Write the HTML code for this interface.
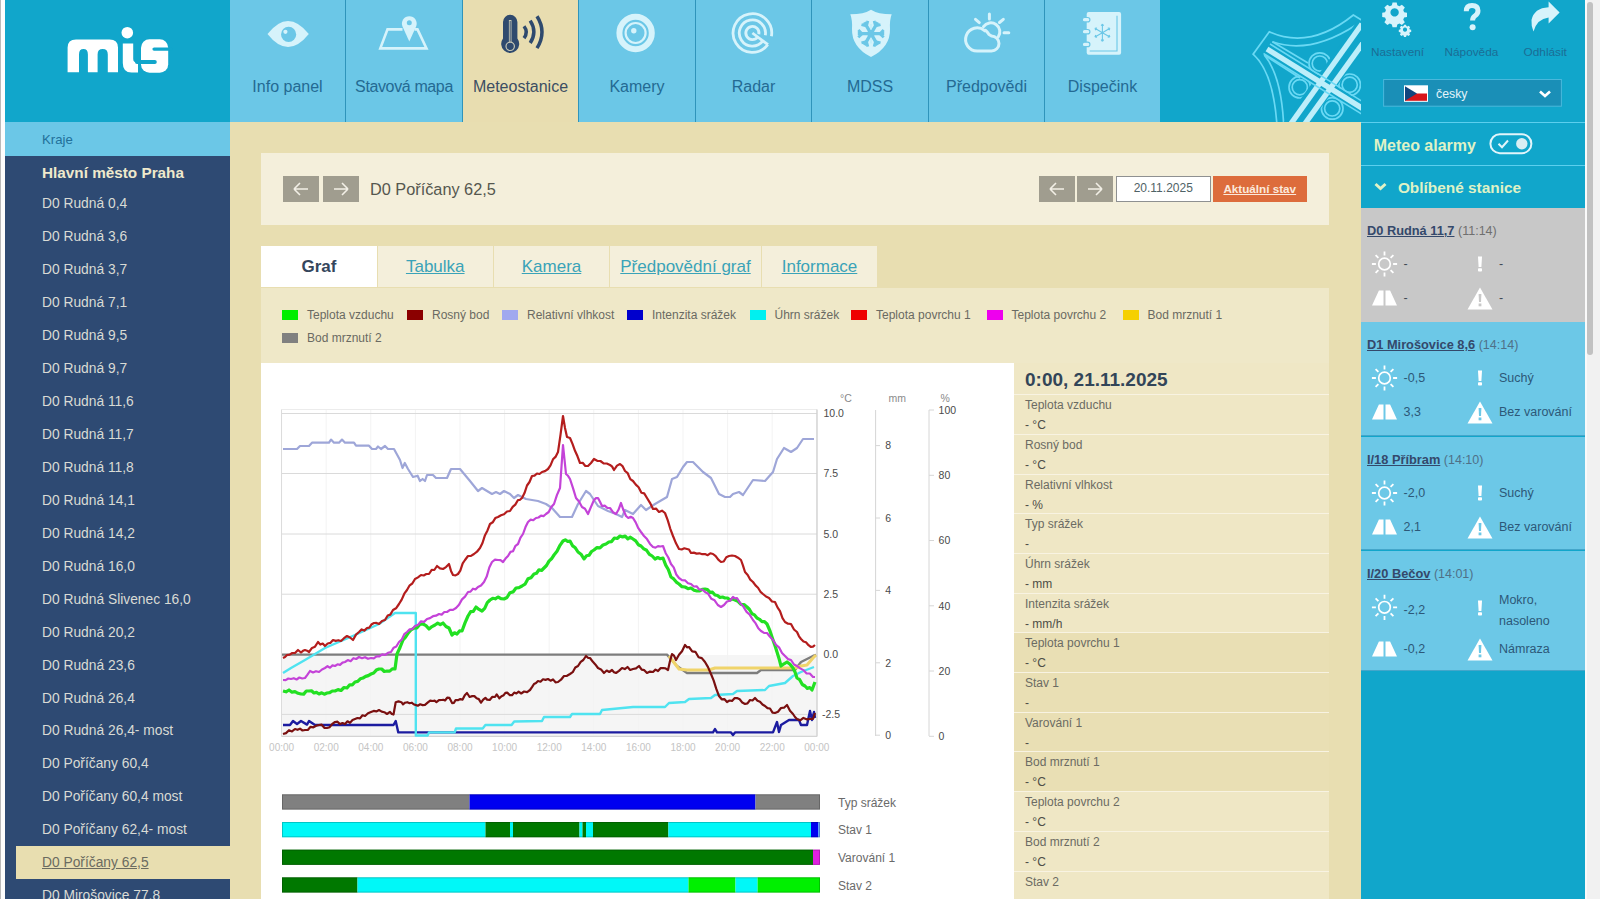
<!DOCTYPE html>
<html><head><meta charset="utf-8">
<style>
*{margin:0;padding:0;box-sizing:border-box}
html,body{width:1600px;height:899px;overflow:hidden;background:#fff;font-family:"Liberation Sans",sans-serif}
.a{position:absolute}
#strip{left:0;top:0;width:5px;height:899px;background:#fdfdfd;border-left:1px solid #b9b9b9}
#logo{left:5px;top:0;width:225px;height:122px;background:#11a6cb}
#nav{left:230px;top:0;width:930px;height:122px;background:#6bc7e7}
.tab{position:absolute;top:0;height:122px}
.tab span{position:absolute;left:-10px;right:-10px;top:78px;text-align:center;font-size:16px;color:#246a93;white-space:nowrap}
.tab.act{background:#e8ddb0}
.tab.act span{color:#3c4e63}
.tab svg{position:absolute;left:0;top:0}
#hdrR{left:1160px;top:0;width:201px;height:122px;background:#11a6cb;overflow:hidden}
#rp{left:1361px;top:0;width:224px;height:899px;background:#11a6cb}
#sb{left:1585px;top:0;width:15px;height:899px;background:#f1f1f1;border-left:2px solid #fafafa}
#thumb{left:1587px;top:2px;width:6px;height:353px;background:#c1c1c1;border-radius:3px}
#side{left:5px;top:122px;width:225px;height:777px;background:#2e4a73;overflow:hidden}
#kraje{left:0;top:0;width:225px;height:34px;background:#6bc7e7;font-size:13.2px;color:#22709a;padding-left:37px;line-height:35px}
#praha{left:37px;top:33.8px;font-size:15.3px;font-weight:bold;color:#efe9cc;line-height:33px;white-space:nowrap}
.si{position:absolute;left:0;width:225px;height:33px;line-height:33px;font-size:13.8px;color:#d9dbd5;padding-left:37px;white-space:nowrap;}
.si.sel{left:11px;width:214px;background:#e8deb0;padding-left:26px;color:#6b6b60}
.si.sel span{text-decoration:underline}
#main{left:230px;top:122px;width:1131px;height:777px;background:#e8deb1;overflow:hidden}
#card{left:31px;top:31px;width:1068px;height:71.5px;background:#f4efdb}
.btn{position:absolute;width:36px;height:25.5px;background:#a09d8f}
.btn svg{position:absolute;left:0;top:0}
#title{left:140px;top:54px;font-size:16.3px;color:#55574f;line-height:20px;white-space:nowrap}
#date{left:886px;top:54px;width:94.5px;height:25.5px;background:#fff;border:1px solid #8e9091;font-size:12px;color:#4f6266;text-align:center;line-height:23px}
#akt{left:982.5px;top:54px;width:94.5px;height:25.5px;background:#dd6c3c;font-size:11.7px;font-weight:bold;color:#fbe9dd;text-align:center;line-height:25px}
#akt span{text-decoration:underline}
.ptab{position:absolute;top:123.5px;height:41.5px;background:#f4efdb;font-size:17px;color:#3aa3b8;text-align:center;line-height:41px;white-space:nowrap}
.ptab span{text-decoration:underline}
.ptab.on{background:#fff;color:#34465c;font-weight:bold}
.ptab.on span{text-decoration:none}
#content{left:31px;top:165.5px;width:1068px;height:620px;background:#efe8c8}
.lg{position:absolute;font-size:12px;color:#6a6a62;white-space:nowrap;line-height:14px}
.lg i{position:absolute;left:-25px;top:2px;width:16px;height:10px}
#chart{left:31px;top:241px;width:753px;height:540px;background:#fff}
#info{left:784px;top:241px;width:315px;height:540px;background:#efe7c5}
#itl{position:absolute;left:11px;top:6px;font-size:19px;font-weight:bold;color:#324558;white-space:nowrap;line-height:22px}
.irow{position:absolute;left:0;width:315px;height:39.8px;border-top:1.5px solid #f8f3e2}
.irow b{position:absolute;left:11px;top:3px;font-weight:normal;font-size:12px;color:#6b6b63;white-space:nowrap}
.irow em{position:absolute;left:11px;top:23px;font-style:normal;font-size:12px;color:#4d4d47;white-space:nowrap}
</style></head>
<body>
<div id="strip" class="a"></div>
<div id="logo" class="a">
<svg width="225" height="122" class="a" style="left:0;top:0">
 <g fill="#fff">
  <path d="M62.6,72.3 V47.5 Q62.6,39.4 71,39.4 H104.5 Q113,39.4 113,47.5 V72.3 H102.8 V54.5 Q102.8,49.1 97.7,49.1 Q92.6,49.1 92.6,54.5 V72.3 H82.9 V54.5 Q82.9,49.1 78.45,49.1 Q74,49.1 74,54.5 V72.3 Z"/>
  <path d="M117.8,43.4 H128.2 V59 Q128.2,62.8 133,62.8 V72.5 H126.5 Q117.8,72.5 117.8,63 Z"/>
  <path d="M162.9,44.8" />
 </g>
 <rect x="136" y="39.2" width="27.2" height="33.6" rx="8.5" fill="#fff"/><rect x="147.4" y="47.4" width="20" height="3.4" rx="1.7" fill="#11a6cb"/><rect x="130" y="59.9" width="21.8" height="4" rx="2" fill="#11a6cb"/>
 <circle cx="122.3" cy="32.7" r="5.8" fill="#fff"/>
</svg>
</div>
<div id="nav" class="a">
<div class="tab" style="left:0px;width:115px"><svg width="115" height="70"><path d="M37.5,34 Q58,8 78.8,34 Q58,60 37.5,34Z" fill="#d6f3fb"/><circle cx="58.6" cy="34.4" r="7.6" fill="#6bc7e7"/><circle cx="55.4" cy="31.8" r="2.1" fill="#d6f3fb"/></svg><span>Info panel</span></div>
<div class="tab" style="left:116px;width:116px"><svg width="116" height="70"><path d="M56.5,29.4 H41.5 L34.3,48.4 H80.5 L71.5,29.4 H68.5" fill="none" stroke="#d6f3fb" stroke-width="2.6"/><path d="M63.3,41.5 L56.5,26.5 A7.4,7.4 0 1,1 70.1,26.5Z" fill="#d6f3fb"/><circle cx="63.3" cy="22.7" r="2.5" fill="#6bc7e7"/></svg><span style="letter-spacing:-0.37px">Stavová mapa</span></div>
<div class="tab act" style="left:233px;width:115px"><svg width="115" height="70"><path d="M40,38.5 V22 A7.2,7.2 0 0,1 54.4,22 V38.5 A9,9 0 1,1 40,38.5Z" fill="#2f4a6e"/><path d="M47.2,20 V42" stroke="#c8c9b6" stroke-width="2.6"/><path d="M47.2,21 V42" stroke="#2f4a6e" stroke-width="0.9"/><circle cx="47.2" cy="46.3" r="4.2" fill="#2f4a6e" stroke="#c8c9b6" stroke-width="1.2"/><g fill="none" stroke="#2f4a6e" stroke-width="3.5"><path d="M61,26.2 Q65.5,32 61,38.1"/><path d="M67.2,20.6 Q74.5,31.8 67.2,43"/><path d="M74,16.2 Q84,32 74,48.1"/></g></svg><span>Meteostanice</span></div>
<div class="tab" style="left:349px;width:116px"><svg width="116" height="70"><circle cx="56.6" cy="33" r="16.2" fill="none" stroke="#d6f3fb" stroke-width="6"/><circle cx="56.6" cy="33" r="10" fill="none" stroke="#d6f3fb" stroke-width="2.2"/><circle cx="54.8" cy="30.8" r="2.7" fill="#d6f3fb"/></svg><span>Kamery</span></div>
<div class="tab" style="left:466px;width:115px"><svg width="115" height="70"><g fill="none" stroke="#d6f3fb" stroke-width="2.8"><path d="M71.81,44.62 A19.3,19.3 0 1,1 75.41,36.35"/><path d="M66.86,40.88 A13.1,13.1 0 1,1 69.30,35.27"/><path d="M61.67,36.97 A6.6,6.6 0 1,1 62.90,34.15"/><path d="M56.4,33 L71.97,44.74"/></g></svg><span>Radar</span></div>
<div class="tab" style="left:582px;width:116px"><svg width="116" height="70"><path d="M59,9.7 Q66,14.3 79.7,14.3 Q77.5,20 78,29 Q78.5,47 59,57.1 Q39.5,47 40,29 Q40.5,20 38.3,14.3 Q52,14.3 59,9.7Z" fill="#d6f3fb"/><path d="M59,33.7 L72.20,33.70 M59,33.7 L65.60,45.13 M59,33.7 L52.40,45.13 M59,33.7 L45.80,33.70 M59,33.7 L52.40,22.27 M59,33.7 L65.60,22.27" stroke="#6bc7e7" stroke-width="3.3" fill="none"/><path d="M68.00,33.70 L71.68,30.02 M68.00,33.70 L71.68,37.38 M63.50,41.49 L68.52,42.84 M63.50,41.49 L62.15,46.52 M54.50,41.49 L55.85,46.52 M54.50,41.49 L49.48,42.84 M50.00,33.70 L46.32,37.38 M50.00,33.70 L46.32,30.02 M54.50,25.91 L49.48,24.56 M54.50,25.91 L55.85,20.88 M63.50,25.91 L62.15,20.88 M63.50,25.91 L68.52,24.56" stroke="#6bc7e7" stroke-width="2.8" fill="none"/><circle cx="59" cy="33.7" r="3.6" fill="#6bc7e7"/><path d="M59,24 V29.5 M59,38 V43.5" stroke="#b9ecf8" stroke-width="1"/></svg><span>MDSS</span></div>
<div class="tab" style="left:699px;width:115px"><svg width="115" height="70"><g fill="none" stroke="#d6f3fb" stroke-width="3" stroke-linecap="round"><path d="M48.15,51.00 H62.50 A7.5,7.5 0 0,0 62.50,36.00 L60.00,34.50 Q57.00,29.50 55.57,30.60 A11.55,11.55 0 1,0 48.15,51.00Z"/><path d="M54.50,26.60 A8.3,8.3 0 0,1 69.20,37.00"/><path d="M60.40,14.00 V19 M46.50,19.30 L50.30,22.60 M74.30,19.30 L70.50,22.50 M75.00,32.70 H79.80"/></g></svg><span>Předpovědi</span></div>
<div class="tab" style="left:815px;width:115px"><svg width="115" height="70"><path d="M43.70,12.00 H74.10 Q76.10,12.00 76.10,14.00 V52.7 Q76.10,54.70 74.10,54.70 H43.70 Q41.70,54.70 41.70,52.70 V14 Q41.70,12.00 43.70,12.00Z" fill="#d6f3fb"/><path d="M72.00,15.70 V51 H44.70" fill="none" stroke="#6bc7e7" stroke-width="1.1"/><g fill="#d6f3fb" stroke="#6bc7e7" stroke-width="1.2"><rect x="37.30" y="17.50" width="7.6" height="4.4" rx="2.2"/><rect x="37.30" y="29.50" width="7.6" height="4.4" rx="2.2"/><rect x="37.30" y="42.20" width="7.6" height="4.4" rx="2.2"/></g><path d="M57.40,32.70 L57.40,41.40 M57.40,41.40 L56.14,39.60 M57.40,41.40 L58.66,39.60 M57.40,32.70 L49.87,37.05 M49.87,37.05 L50.80,35.06 M49.87,37.05 L52.06,37.24 M57.40,32.70 L49.87,28.35 M49.87,28.35 L52.06,28.16 M49.87,28.35 L50.80,30.34 M57.40,32.70 L57.40,24.00 M57.40,24.00 L58.66,25.80 M57.40,24.00 L56.14,25.80 M57.40,32.70 L64.93,28.35 M64.93,28.35 L64.00,30.34 M64.93,28.35 L62.74,28.16 M57.40,32.70 L64.93,37.05 M64.93,37.05 L62.74,37.24 M64.93,37.05 L64.00,35.06" stroke="#6bc7e7" stroke-width="1.1" fill="none"/></svg><span>Dispečink</span></div>
<div class="a" style="left:115px;top:0;width:1px;height:122px;background:#2f94bb"></div>
<div class="a" style="left:232px;top:0;width:1px;height:122px;background:#2f94bb"></div>
<div class="a" style="left:348px;top:0;width:1px;height:122px;background:#2f94bb"></div>
<div class="a" style="left:465px;top:0;width:1px;height:122px;background:#2f94bb"></div>
<div class="a" style="left:581px;top:0;width:1px;height:122px;background:#2f94bb"></div>
<div class="a" style="left:698px;top:0;width:1px;height:122px;background:#2f94bb"></div>
<div class="a" style="left:814px;top:0;width:1px;height:122px;background:#2f94bb"></div>
</div>
<div id="hdrR" class="a">
<svg width="201" height="122" class="a" style="left:0;top:0" viewBox="1160 0 201 122">
 <g fill="none" stroke="#6ad9f4" stroke-width="1.7">
  <path d="M1276.8,123 Q1273,72 1253.1,54.2 L1269.3,31.8 Q1310,50 1353.4,15 L1362,20.5"/>
  <path d="M1283.6,123 Q1281,75 1264.3,55"/>
  <path d="M1272.4,41.8 Q1310,55 1356,25"/>
  <path d="M1264.3,55 L1300,78"/>
  <path d="M1272.4,41.8 L1308,63"/>
  <circle cx="1319.8" cy="63.6" r="10.8"/>
  <circle cx="1319.8" cy="63.6" r="7.6"/>
  <circle cx="1299.8" cy="87.2" r="10.8"/>
  <circle cx="1299.8" cy="87.2" r="7.6"/>
  <circle cx="1349.7" cy="84.8" r="10.8"/>
  <circle cx="1349.7" cy="84.8" r="7.6"/>
  <circle cx="1332.2" cy="108.4" r="10.8"/>
  <circle cx="1332.2" cy="108.4" r="7.6"/>
 </g>
 <g fill="none" stroke="#11a6cb" stroke-width="10">
  <path d="M1266,48.5 L1365,110"/>
  <path d="M1362,23 L1288,125"/>
  <path d="M1366,38 L1302,125"/>
 </g>
 <g fill="none" stroke="#bdeefa" stroke-width="5.4">
  <path d="M1267,49 L1365,110"/>
  <path d="M1362,24 L1290,125"/>
  <path d="M1366,39 L1304,125"/>
 </g>
 <g fill="none" stroke="#6ad9f4" stroke-width="1.5">
  <path d="M1263.5,53.5 L1365,116"/>
  <path d="M1270,44 L1365,103"/>
 </g>
</svg>
</div>
<div id="main" class="a">
<div id="card" class="a">
<div class="btn" style="left:22px;top:23px"><svg width="36" height="26"><path d="M11,13H25M11,13L17,7M11,13L17,19" stroke="#f2efe6" stroke-width="1.6" fill="none"/></svg></div>
<div class="btn" style="left:61.5px;top:23px"><svg width="36" height="26"><path d="M11,13H25M25,13L19,7M25,13L19,19" stroke="#f2efe6" stroke-width="1.6" fill="none"/></svg></div>
<div class="a" id="title" style="left:109px;top:26px">D0 Poříčany 62,5</div>
<div class="btn" style="left:777.6px;top:23px"><svg width="36" height="26"><path d="M11,13H25M11,13L17,7M11,13L17,19" stroke="#f2efe6" stroke-width="1.6" fill="none"/></svg></div>
<div class="btn" style="left:816.4px;top:23px"><svg width="36" height="26"><path d="M11,13H25M25,13L19,7M25,13L19,19" stroke="#f2efe6" stroke-width="1.6" fill="none"/></svg></div>
<div class="a" id="date" style="left:855px;top:23px">20.11.2025</div>
<div class="a" id="akt" style="left:951.5px;top:23px"><span>Aktuální stav</span></div>
</div>
<div class="ptab on" style="left:31px;width:116px"><span>Graf</span></div>
<div class="ptab" style="left:147.5px;width:115.5px"><span>Tabulka</span></div>
<div class="ptab" style="left:264px;width:115px"><span>Kamera</span></div>
<div class="ptab" style="left:380px;width:151px"><span>Předpovědní graf</span></div>
<div class="ptab" style="left:532px;width:115px"><span>Informace</span></div>
<div id="content" class="a"></div>
<div class="lg" style="left:77px;top:186px"><i style="background:#00ee00"></i>Teplota vzduchu</div>
<div class="lg" style="left:202px;top:186px"><i style="background:#8b0000"></i>Rosný bod</div>
<div class="lg" style="left:297px;top:186px"><i style="background:#a0a8ef"></i>Relativní vlhkost</div>
<div class="lg" style="left:422px;top:186px"><i style="background:#0000cd"></i>Intenzita srážek</div>
<div class="lg" style="left:544.5px;top:186px"><i style="background:#00f0f0"></i>Úhrn srážek</div>
<div class="lg" style="left:646px;top:186px"><i style="background:#ee0000"></i>Teplota povrchu 1</div>
<div class="lg" style="left:781.5px;top:186px"><i style="background:#ee00ee"></i>Teplota povrchu 2</div>
<div class="lg" style="left:917.5px;top:186px"><i style="background:#f5d000"></i>Bod mrznutí 1</div>
<div class="lg" style="left:77px;top:209px"><i style="background:#808080"></i>Bod mrznutí 2</div>
<div id="chart" class="a"></div>
<div id="info" class="a">
<div id="itl">0:00, 21.11.2025</div>
<div class="irow" style="top:31.1px"><b>Teplota vzduchu</b><em>- °C</em></div>
<div class="irow" style="top:70.8px"><b>Rosný bod</b><em>- °C</em></div>
<div class="irow" style="top:110.5px"><b>Relativní vlhkost</b><em>- %</em></div>
<div class="irow" style="top:150.2px"><b>Typ srážek</b><em>-</em></div>
<div class="irow" style="top:189.9px"><b>Úhrn srážek</b><em>- mm</em></div>
<div class="irow" style="top:229.6px"><b>Intenzita srážek</b><em>- mm/h</em></div>
<div class="irow" style="top:269.3px;background:#e9dfb4"><b>Teplota povrchu 1</b><em>- °C</em></div>
<div class="irow" style="top:309.0px;background:#e9dfb4"><b>Stav 1</b><em>-</em></div>
<div class="irow" style="top:348.7px;background:#e9dfb4"><b>Varování 1</b><em>-</em></div>
<div class="irow" style="top:388.4px;background:#e9dfb4"><b>Bod mrznutí 1</b><em>- °C</em></div>
<div class="irow" style="top:428.1px"><b>Teplota povrchu 2</b><em>- °C</em></div>
<div class="irow" style="top:467.8px"><b>Bod mrznutí 2</b><em>- °C</em></div>
<div class="irow" style="top:507.5px"><b>Stav 2</b><em></em></div>
</div>
</div>
<svg class="a" style="left:261px;top:363px" width="753" height="536" viewBox="261 363 753 536">
<rect x="282" y="655" width="535" height="81.5" fill="#f5f5f5"/>
<line x1="281.6" y1="410" x2="281.6" y2="736" stroke="#f3f3f3" stroke-width="1"/>
<line x1="326.2" y1="410" x2="326.2" y2="736" stroke="#f3f3f3" stroke-width="1"/>
<line x1="370.8" y1="410" x2="370.8" y2="736" stroke="#f3f3f3" stroke-width="1"/>
<line x1="415.4" y1="410" x2="415.4" y2="736" stroke="#f3f3f3" stroke-width="1"/>
<line x1="460.0" y1="410" x2="460.0" y2="736" stroke="#f3f3f3" stroke-width="1"/>
<line x1="504.6" y1="410" x2="504.6" y2="736" stroke="#f3f3f3" stroke-width="1"/>
<line x1="549.2" y1="410" x2="549.2" y2="736" stroke="#f3f3f3" stroke-width="1"/>
<line x1="593.8" y1="410" x2="593.8" y2="736" stroke="#f3f3f3" stroke-width="1"/>
<line x1="638.4" y1="410" x2="638.4" y2="736" stroke="#f3f3f3" stroke-width="1"/>
<line x1="683.0" y1="410" x2="683.0" y2="736" stroke="#f3f3f3" stroke-width="1"/>
<line x1="727.6" y1="410" x2="727.6" y2="736" stroke="#f3f3f3" stroke-width="1"/>
<line x1="772.2" y1="410" x2="772.2" y2="736" stroke="#f3f3f3" stroke-width="1"/>
<line x1="816.8" y1="410" x2="816.8" y2="736" stroke="#f3f3f3" stroke-width="1"/>
<line x1="281.5" y1="409.5" x2="817" y2="409.5" stroke="#ececec" stroke-width="1"/>
<line x1="282" y1="413.5" x2="817" y2="413.5" stroke="#dadada" stroke-width="1"/>
<line x1="282" y1="473.5" x2="817" y2="473.5" stroke="#dadada" stroke-width="1"/>
<line x1="282" y1="534" x2="817" y2="534" stroke="#dadada" stroke-width="1"/>
<line x1="282" y1="594.2" x2="817" y2="594.2" stroke="#dadada" stroke-width="1"/>
<line x1="282" y1="714.4" x2="817" y2="714.4" stroke="#dadada" stroke-width="1"/>
<line x1="281.5" y1="409.5" x2="281.5" y2="736.5" stroke="#dcdcdc" stroke-width="1"/>
<line x1="817" y1="409.5" x2="817" y2="736.5" stroke="#cfcfcf" stroke-width="1.3"/>
<line x1="281.5" y1="736.4" x2="817" y2="736.4" stroke="#d4d4d4" stroke-width="1.2"/>
<polyline points="282.0,654.6 667.0,654.6 677.0,666.0 687.0,673.0 757.0,673.0 761.0,670.0 795.0,670.0 801.0,662.0 813.0,656.0 816.0,655.0" fill="none" stroke="#7d7d7d" stroke-width="2.4" stroke-linejoin="round"/>
<polyline points="669.0,656.0 679.0,669.0 687.0,670.0 709.0,670.0 715.0,668.0 795.0,668.0 801.0,666.0 807.0,665.0 813.0,658.0 816.0,655.0" fill="none" stroke="#f0d46a" stroke-width="3" stroke-linejoin="round"/>
<polyline points="283.0,449.0 297.0,449.0 300.0,446.0 309.0,446.0 312.0,442.7 329.0,442.7 331.0,439.6 334.0,442.7 339.0,442.7 342.0,439.6 345.0,442.7 354.0,442.7 356.0,445.7 369.0,445.7 372.0,449.0 376.0,449.0 378.0,446.5 381.0,449.0 385.0,446.0 388.0,449.0 394.0,449.0 400.0,460.0 402.5,468.0 404.8,463.0 408.0,469.0 413.0,477.0 417.6,475.7 420.0,481.0 422.6,479.0 425.0,481.0 427.0,475.0 433.0,475.0 436.0,478.0 447.0,478.0 451.0,469.0 460.0,469.0 470.0,481.0 478.0,491.0 482.0,488.0 492.0,494.0 496.0,492.0 500.0,494.0 504.0,491.0 510.0,494.0 514.0,498.0 518.0,495.0 526.0,499.0 538.0,501.0 546.0,504.0 552.0,508.0 560.0,517.0 572.0,517.0 578.0,504.0 586.0,491.0 590.0,494.0 598.0,506.0 608.0,511.0 616.0,514.0 622.0,517.0 625.0,510.0 633.0,514.0 641.0,505.0 646.0,510.0 655.0,504.0 667.0,497.0 672.0,479.0 677.0,477.0 683.0,467.0 687.0,462.0 693.0,462.0 703.0,472.0 711.0,478.0 719.0,494.0 725.0,497.0 730.0,497.0 733.0,494.0 739.0,492.0 743.0,495.0 753.0,480.0 765.0,481.0 773.0,472.0 777.0,459.0 784.0,448.0 791.0,452.0 797.0,448.0 803.0,439.0 814.0,439.0" fill="none" stroke="#9ea6d8" stroke-width="2.2" stroke-linejoin="round"/>
<polyline points="283.0,725.0 290.0,725.0 293.0,721.0 297.0,724.0 301.0,721.0 307.0,724.6 309.0,721.0 315.0,725.0 393.5,725.0 395.7,721.0 398.3,732.4 713.0,732.4 715.0,729.0 717.0,732.4 731.0,732.4 733.0,735.0 735.0,732.4 773.0,732.4 777.0,722.0 779.0,732.0 781.0,725.0 789.0,720.0 799.0,720.0 801.0,725.0 807.0,725.0 810.0,711.0 812.0,720.0 814.0,712.0 815.0,718.0" fill="none" stroke="#1c1ca0" stroke-width="2.4" stroke-linejoin="round"/>
<polyline points="283.0,673.0 291.0,668.0 305.0,660.0 325.0,648.0 355.0,635.0 379.0,624.0 395.0,613.0 415.8,613.0 415.8,735.5 427.6,735.5 429.0,732.4 454.7,732.4 456.0,728.5 482.7,728.5 485.4,725.0 511.6,725.0 514.2,721.5 542.0,721.0 544.0,717.0 570.0,717.0 572.0,714.0 600.0,714.0 602.0,710.0 633.0,707.0 665.0,707.0 669.0,703.0 685.0,702.0 689.0,699.0 711.0,698.0 715.0,695.0 733.0,694.0 737.0,691.0 765.0,690.0 769.0,686.0 785.0,683.0 793.0,676.0 801.0,672.0 814.0,667.0" fill="none" stroke="#4fe3f0" stroke-width="2.4" stroke-linejoin="round"/>
<polyline points="283.0,734.0 286.0,733.1 289.0,730.2 292.0,731.4 295.0,729.0 297.5,729.8 300.0,728.7 302.5,730.5 305.0,730.0 307.8,730.0 310.6,726.8 313.4,727.3 316.2,725.8 319.0,725.0 321.7,724.7 324.3,727.8 327.0,728.0 329.7,727.2 332.3,723.8 335.0,722.0 337.5,721.7 340.0,724.1 342.5,723.0 345.0,724.0 347.5,721.3 350.0,722.9 352.5,720.0 355.0,719.0 357.5,718.0 360.0,718.4 362.5,715.3 365.0,716.0 368.0,713.3 371.0,712.0 373.7,710.9 376.3,711.4 379.0,710.0 381.7,711.6 384.3,712.2 387.0,714.0 390.0,711.9 391.8,714.0 393.5,714.5 395.7,702.2 398.5,701.4 401.4,702.2 403.0,704.4 405.0,702.7 407.3,702.2 409.6,703.2 411.9,702.7 413.6,704.3 415.4,704.9 417.8,705.7 420.2,704.3 422.6,705.1 425.0,704.9 427.6,702.7 430.2,700.6 432.9,701.0 434.6,700.7 436.4,702.2 439.0,700.1 441.6,700.0 443.3,699.8 445.0,700.5 447.2,697.7 449.5,697.9 452.1,703.1 453.9,702.9 455.6,700.0 457.9,700.2 460.3,699.1 462.6,699.6 464.8,695.2 467.0,693.0 469.6,697.0 472.2,696.1 474.4,696.1 476.6,698.3 478.8,699.1 481.0,702.7 483.2,699.6 485.4,697.9 487.1,699.6 489.7,700.0 492.4,696.8 495.0,697.0 496.7,694.4 499.4,698.3 501.5,696.2 503.7,695.2 505.4,692.9 507.2,692.6 509.9,695.2 512.0,695.2 514.2,692.6 516.4,693.5 518.6,691.7 521.2,693.5 524.1,691.5 527.1,692.1 530.0,690.0 532.0,687.2 534.0,684.0 536.0,683.0 538.0,681.0 540.5,681.7 543.0,679.3 545.5,679.9 548.0,679.0 550.5,680.7 553.0,679.4 555.5,682.3 558.0,682.0 561.0,679.7 564.0,676.0 567.0,675.8 570.0,674.0 572.7,672.2 575.3,667.5 578.0,666.0 580.7,661.8 583.3,660.0 586.0,656.0 588.0,657.8 590.0,658.0 592.7,661.6 595.3,664.4 598.0,668.0 601.0,669.4 604.0,673.0 606.7,670.5 609.3,672.0 612.0,670.0 614.0,672.2 616.0,673.0 619.0,670.9 622.0,668.0 624.8,669.1 627.5,667.0 630.2,670.0 633.0,669.0 636.0,668.4 639.0,666.0 641.7,669.7 644.3,670.2 647.0,673.0 650.0,671.6 653.0,672.0 655.5,669.6 658.0,671.0 660.5,668.2 663.0,668.0 665.5,668.4 668.0,670.0 670.0,661.1 672.0,654.0 674.0,655.6 676.0,660.0 679.0,654.8 682.0,651.2 685.0,645.0 687.0,647.3 689.0,647.0 692.2,651.4 695.4,651.8 698.6,657.3 701.8,658.1 705.0,662.0 708.0,667.1 711.0,674.0 713.7,680.6 716.3,688.9 719.0,696.0 721.7,699.3 724.3,699.1 727.0,702.0 729.5,700.5 732.0,700.9 734.5,698.2 737.0,698.0 739.7,699.3 742.3,702.6 745.0,704.0 747.5,703.4 750.0,700.0 752.5,700.5 755.0,698.0 757.5,700.8 760.0,701.8 762.5,704.5 765.0,706.0 767.5,708.2 770.0,708.5 772.5,712.6 775.0,713.0 778.0,711.7 781.0,708.0 784.0,707.7 787.0,705.0 790.0,710.8 793.0,714.0 795.0,717.0 797.0,719.0 800.2,720.3 803.4,717.9 806.6,719.3 809.8,718.8 813.0,719.0 815.0,713.0" fill="none" stroke="#7a1010" stroke-width="2.2" stroke-linejoin="round"/>
<polyline points="283.0,691.0 286.0,691.8 289.0,690.0 292.0,692.2 295.0,691.7 298.0,693.3 301.0,694.0 303.7,694.1 306.3,691.0 309.0,691.0 311.5,690.8 314.0,693.0 316.5,692.4 319.0,694.0 321.7,692.8 324.3,694.2 327.0,693.0 329.7,692.7 332.3,691.0 335.0,691.0 338.0,689.6 341.0,690.5 344.0,687.5 347.0,688.0 349.7,684.8 352.3,684.8 355.0,682.0 357.7,681.4 360.3,678.8 363.0,678.0 365.7,676.4 368.3,675.6 371.0,674.0 373.7,673.0 376.3,670.1 379.0,669.0 381.7,669.0 384.3,671.5 387.0,671.0 389.7,671.1 392.3,668.9 395.0,669.0 397.0,654.0 400.0,647.5 403.0,640.0 405.7,636.9 408.3,632.8 411.0,630.0 414.0,628.1 417.0,627.8 420.0,624.2 423.0,624.0 426.0,625.6 429.0,629.0 432.0,626.6 435.0,625.0 437.7,623.2 440.3,624.7 443.0,623.0 446.0,626.5 449.0,628.0 452.0,635.0 454.5,632.8 457.0,634.0 459.5,630.9 462.0,631.0 465.0,622.9 468.0,616.0 470.7,611.7 473.3,611.3 476.0,607.0 479.0,609.4 482.0,611.0 484.7,608.4 487.3,602.7 490.0,600.0 492.7,598.3 495.3,598.8 498.0,597.0 501.0,598.7 504.0,599.0 507.0,597.5 510.0,592.7 513.0,591.9 516.0,588.0 519.0,587.6 522.0,586.0 525.0,584.2 528.0,578.8 531.0,577.7 534.0,574.0 536.5,573.3 539.0,569.8 541.5,570.5 544.0,568.0 546.5,565.5 549.0,561.1 551.5,558.8 554.0,555.0 557.0,551.3 560.0,545.3 563.0,541.0 565.3,539.8 567.7,541.5 570.0,541.0 572.7,545.9 575.3,547.8 578.0,552.0 581.0,554.2 584.0,559.0 586.5,555.8 589.0,555.3 591.5,551.5 594.0,550.0 597.0,547.6 600.0,547.8 603.0,545.0 606.0,544.0 608.8,542.0 611.6,541.6 614.4,538.0 617.2,538.5 620.0,536.0 622.6,536.9 625.2,536.1 627.8,538.8 630.4,537.2 633.0,539.0 635.7,540.9 638.3,544.7 641.0,546.0 643.8,548.9 646.6,550.3 649.4,554.3 652.2,556.0 655.0,559.0 657.7,557.5 660.3,558.7 663.0,558.0 665.7,565.1 668.3,569.5 671.0,577.0 673.7,578.9 676.3,582.1 679.0,584.0 682.0,586.7 685.0,587.0 688.0,588.7 691.0,588.0 694.0,590.2 697.0,591.0 699.7,590.9 702.3,589.3 705.0,589.0 707.5,589.6 710.0,592.3 712.5,592.2 715.0,595.0 717.5,595.5 720.0,597.5 722.5,597.0 725.0,598.0 727.5,598.0 730.0,600.1 732.5,599.1 735.0,600.0 738.0,601.3 741.0,604.5 744.0,604.6 747.0,607.0 749.5,609.5 752.0,613.8 754.5,614.9 757.0,618.0 759.5,619.3 762.0,621.6 764.5,621.6 767.0,624.0 770.0,631.0 773.0,640.0 775.0,645.7 777.0,652.0 779.0,658.4 781.0,666.0 784.0,663.8 787.0,662.0 790.0,664.3 793.0,668.0 795.0,672.0 797.0,678.0 799.7,679.7 802.3,684.5 805.0,686.0 807.3,688.4 809.7,687.5 812.0,690.0 815.0,682.0" fill="none" stroke="#22e022" stroke-width="3.2" stroke-linejoin="round"/>
<polyline points="283.0,680.0 285.7,680.1 288.3,678.5 291.0,679.0 293.8,678.2 296.6,679.5 299.4,677.5 302.2,678.5 305.0,678.0 307.5,674.7 310.0,671.0 313.0,672.5 316.0,671.2 319.0,672.0 322.0,669.5 325.0,668.0 327.5,666.2 330.0,667.7 332.5,665.4 335.0,666.0 337.5,664.3 340.0,664.9 342.5,662.6 345.0,662.0 347.8,660.1 350.6,661.2 353.4,658.2 356.2,659.0 359.0,657.0 362.0,658.2 365.0,657.2 368.0,658.8 371.0,658.0 373.8,658.3 376.6,656.3 379.4,656.4 382.2,654.4 385.0,655.0 388.0,652.8 391.0,652.0 393.7,647.7 396.3,646.5 399.0,642.0 401.7,639.7 404.3,634.1 407.0,632.0 409.7,629.4 412.3,629.1 415.0,626.0 418.0,624.9 421.0,621.3 424.0,621.9 427.0,619.0 430.0,618.1 433.0,616.2 436.0,615.7 439.0,614.0 441.7,614.6 444.3,612.0 447.0,612.0 450.0,609.8 453.0,609.9 456.0,608.0 459.0,604.8 462.0,599.4 465.0,596.6 468.0,592.0 470.5,591.6 473.0,588.7 475.5,589.4 478.0,587.0 481.0,585.5 484.0,582.0 486.7,576.6 489.3,567.5 492.0,562.0 495.0,559.7 498.0,560.0 500.5,560.1 503.0,562.0 505.5,558.6 508.0,556.0 510.5,551.9 513.0,551.3 515.5,545.8 518.0,544.0 520.5,537.7 523.0,534.0 525.5,527.1 528.0,522.0 530.7,519.6 533.3,520.2 536.0,518.0 538.5,517.5 541.0,515.7 543.5,516.1 546.0,514.0 548.7,512.0 551.3,507.0 554.0,504.0 557.0,494.9 560.0,488.0 563.0,445.0 566.0,474.0 568.0,475.8 570.0,479.0 573.0,488.1 576.0,498.0 579.0,501.5 582.0,507.0 585.0,508.8 588.0,514.0 591.0,506.8 594.0,500.0 596.0,498.1 598.0,498.0 600.0,501.8 602.0,506.0 604.7,505.7 607.3,507.9 610.0,508.0 613.0,512.2 616.0,514.0 618.5,509.8 621.0,503.0 623.5,510.3 626.0,516.0 628.3,518.0 630.7,516.8 633.0,518.0 635.7,522.4 638.3,528.2 641.0,532.0 644.0,536.0 647.0,539.1 650.0,543.9 653.0,547.0 655.5,547.6 658.0,546.1 660.5,546.5 663.0,546.0 665.7,553.2 668.3,557.5 671.0,564.0 673.7,567.4 676.3,574.5 679.0,578.0 682.0,580.1 685.0,580.3 688.0,583.3 691.0,584.0 693.8,586.5 696.6,586.3 699.4,589.6 702.2,589.5 705.0,592.0 708.2,593.8 711.4,598.8 714.6,600.3 717.8,605.0 721.0,607.0 724.0,605.0 727.0,601.5 730.0,600.8 733.0,597.0 735.0,598.3 737.0,598.0 740.2,603.2 743.4,606.6 746.6,611.9 749.8,614.8 753.0,620.0 755.7,623.4 758.3,628.2 761.0,631.0 764.0,632.9 767.0,633.0 770.0,636.8 773.0,640.0 776.0,644.9 779.0,647.3 782.0,652.9 785.0,656.0 788.0,659.1 791.0,660.0 794.0,664.5 797.0,666.0 800.2,668.4 803.4,670.1 806.6,673.5 809.8,673.5 813.0,677.0 815.0,677.0" fill="none" stroke="#c443d8" stroke-width="2.2" stroke-linejoin="round"/>
<polyline points="283.0,658.0 285.0,657.0 287.0,655.0 289.7,654.7 292.3,653.0 295.0,653.0 298.0,650.0 301.0,652.5 303.0,650.8 305.0,650.0 307.0,650.7 309.0,652.0 312.0,647.9 315.0,646.7 318.0,642.0 320.3,644.6 322.7,643.5 325.0,646.0 327.7,643.5 330.3,642.9 333.0,640.0 335.7,640.9 338.3,640.2 341.0,641.0 344.0,638.2 347.0,636.0 350.0,637.5 353.0,640.0 356.0,634.6 359.0,632.0 361.7,629.4 364.3,630.6 367.0,628.0 369.3,627.6 371.7,624.2 374.0,623.0 376.5,622.9 379.0,624.0 382.0,621.0 385.0,620.0 387.7,615.5 390.3,614.6 393.0,610.0 396.0,608.3 399.0,604.0 401.7,599.6 404.3,593.7 407.0,590.0 409.7,585.3 412.3,583.5 415.0,579.0 418.0,577.4 421.0,575.0 423.7,575.5 426.3,574.0 429.0,574.0 431.7,569.9 434.3,570.0 437.0,566.0 440.0,568.4 443.0,569.0 446.0,567.1 449.0,564.0 451.0,570.9 453.0,575.0 455.5,575.4 458.0,574.0 460.3,570.7 462.7,563.4 465.0,560.0 468.0,556.0 471.0,555.9 474.0,554.0 477.0,551.7 480.0,548.0 482.5,543.0 485.0,535.2 487.5,530.4 490.0,524.0 492.7,522.3 495.3,518.1 498.0,517.0 501.0,515.2 504.0,514.3 507.0,511.5 510.0,511.0 512.7,506.8 515.3,504.6 518.0,500.0 520.0,499.8 522.0,498.0 524.5,493.1 527.0,485.5 529.5,482.0 532.0,476.0 534.5,475.7 537.0,473.5 539.5,474.0 542.0,472.0 545.0,471.1 548.0,469.0 550.5,465.4 553.0,459.3 555.5,456.9 558.0,452.0 560.5,434.9 563.0,416.0 565.0,427.9 567.0,437.0 570.0,438.0 572.5,443.9 575.0,450.8 577.5,456.3 580.0,463.0 582.7,462.8 585.3,466.0 588.0,466.0 591.0,463.0 594.0,459.0 597.2,460.8 600.4,461.0 603.6,463.4 606.8,463.5 610.0,465.0 612.0,466.4 614.0,470.0 617.0,465.6 620.0,464.0 622.5,466.1 625.0,471.0 627.7,473.2 630.3,479.1 633.0,481.0 635.8,484.6 638.6,487.2 641.4,492.7 644.2,493.4 647.0,498.0 650.0,502.8 653.0,509.0 656.0,508.6 659.0,512.0 662.0,510.7 665.0,513.0 667.7,520.1 670.3,528.8 673.0,536.0 676.0,543.3 679.0,549.0 681.7,549.4 684.3,548.3 687.0,549.0 689.0,549.5 691.0,553.0 693.8,552.6 696.6,553.6 699.4,553.3 702.2,554.2 705.0,554.0 707.7,555.2 710.3,553.3 713.0,554.0 715.7,556.1 718.3,559.7 721.0,562.0 723.7,561.5 726.3,557.2 729.0,556.0 732.0,555.5 735.0,556.0 738.0,557.7 741.0,560.0 743.0,565.7 745.0,572.0 747.7,574.9 750.3,579.7 753.0,582.0 755.5,585.4 758.0,587.7 760.5,591.8 763.0,594.0 766.0,596.5 769.0,598.0 772.0,601.5 775.0,602.0 777.5,607.4 780.0,611.1 782.5,618.2 785.0,622.0 788.0,623.7 791.0,624.0 794.0,629.5 797.0,632.0 799.0,636.3 801.0,639.0 803.5,641.5 806.0,642.3 808.5,645.2 811.0,647.0 813.0,646.7 815.0,645.0" fill="none" stroke="#b41d1d" stroke-width="2.2" stroke-linejoin="round"/>
<g font-family="Liberation Sans" font-size="10.5" fill="#4a4a4a">
<text x="823.5" y="417.3">10.0</text>
<text x="823.5" y="477.3">7.5</text>
<text x="823.5" y="537.8">5.0</text>
<text x="823.5" y="598.0">2.5</text>
<text x="823.5" y="658.4">0.0</text>
<text x="822" y="718.1999999999999">-2.5</text>
<text x="885.3" y="449.40000000000003">8</text>
<text x="885.3" y="521.8">6</text>
<text x="885.3" y="594.1999999999999">4</text>
<text x="885.3" y="666.5999999999999">2</text>
<text x="885.3" y="739.0">0</text>
<text x="938.6" y="413.8">100</text>
<text x="938.6" y="479.1">80</text>
<text x="938.6" y="544.3">60</text>
<text x="938.6" y="609.5999999999999">40</text>
<text x="938.6" y="674.8">20</text>
<text x="938.6" y="740.0999999999999">0</text>
</g>
<g font-family="Liberation Sans" font-size="10.5" fill="#8a8a8a">
<text x="840" y="402">°C</text><text x="888.5" y="402">mm</text><text x="940.5" y="402">%</text>
</g>
<line x1="875.6" y1="410" x2="875.6" y2="736" stroke="#d6d6d6" stroke-width="1"/>
<line x1="929" y1="410" x2="929" y2="736" stroke="#d6d6d6" stroke-width="1"/>
<line x1="875.6" y1="445.6" x2="880" y2="445.6" stroke="#d6d6d6"/>
<line x1="875.6" y1="518" x2="880" y2="518" stroke="#d6d6d6"/>
<line x1="875.6" y1="590.4" x2="880" y2="590.4" stroke="#d6d6d6"/>
<line x1="875.6" y1="662.8" x2="880" y2="662.8" stroke="#d6d6d6"/>
<line x1="875.6" y1="735.2" x2="880" y2="735.2" stroke="#d6d6d6"/>
<line x1="929" y1="410" x2="934" y2="410" stroke="#d6d6d6"/>
<line x1="929" y1="475.3" x2="934" y2="475.3" stroke="#d6d6d6"/>
<line x1="929" y1="540.5" x2="934" y2="540.5" stroke="#d6d6d6"/>
<line x1="929" y1="605.8" x2="934" y2="605.8" stroke="#d6d6d6"/>
<line x1="929" y1="671" x2="934" y2="671" stroke="#d6d6d6"/>
<line x1="929" y1="736.3" x2="934" y2="736.3" stroke="#d6d6d6"/>
<g font-family="Liberation Sans" font-size="10" fill="#c4c4c4" text-anchor="middle">
<text x="281.6" y="751">00:00</text>
<text x="326.2" y="751">02:00</text>
<text x="370.8" y="751">04:00</text>
<text x="415.4" y="751">06:00</text>
<text x="460.0" y="751">08:00</text>
<text x="504.6" y="751">10:00</text>
<text x="549.2" y="751">12:00</text>
<text x="593.8" y="751">14:00</text>
<text x="638.4" y="751">16:00</text>
<text x="683.0" y="751">18:00</text>
<text x="727.6" y="751">20:00</text>
<text x="772.2" y="751">22:00</text>
<text x="816.8" y="751">00:00</text>
</g>
<rect x="282" y="794.3" width="187.5" height="15.3" fill="#808080"/>
<rect x="469.5" y="794.3" width="286.0" height="15.3" fill="#0000f0"/>
<rect x="755.5" y="794.3" width="64.5" height="15.3" fill="#808080"/>
<rect x="282.5" y="794.8" width="537" height="14.3" fill="none" stroke="rgba(0,0,0,0.2)" stroke-width="1"/>
<rect x="282" y="822" width="203.5" height="15.3" fill="#00f8f8"/>
<rect x="485.5" y="822" width="24.5" height="15.3" fill="#007800"/>
<rect x="510" y="822" width="3" height="15.3" fill="#00f8f8"/>
<rect x="513" y="822" width="66.5" height="15.3" fill="#007800"/>
<rect x="579.5" y="822" width="3.0" height="15.3" fill="#00f8f8"/>
<rect x="582.5" y="822" width="3.5" height="15.3" fill="#007800"/>
<rect x="586" y="822" width="7" height="15.3" fill="#00f8f8"/>
<rect x="593" y="822" width="75.39999999999998" height="15.3" fill="#007800"/>
<rect x="668.4" y="822" width="142.60000000000002" height="15.3" fill="#00f8f8"/>
<rect x="811" y="822" width="7" height="15.3" fill="#0000f0"/>
<rect x="818" y="822" width="2" height="15.3" fill="#60a0ff"/>
<rect x="282.5" y="822.5" width="537" height="14.3" fill="none" stroke="rgba(0,0,0,0.2)" stroke-width="1"/>
<rect x="282" y="849.6" width="531" height="15.3" fill="#007800"/>
<rect x="813" y="849.6" width="7" height="15.3" fill="#e020e0"/>
<rect x="282.5" y="850.1" width="537" height="14.3" fill="none" stroke="rgba(0,0,0,0.2)" stroke-width="1"/>
<rect x="282" y="877.3" width="75.5" height="15.3" fill="#007800"/>
<rect x="357.5" y="877.3" width="331.0" height="15.3" fill="#00f8f8"/>
<rect x="688.5" y="877.3" width="47.0" height="15.3" fill="#00f000"/>
<rect x="735.5" y="877.3" width="22.100000000000023" height="15.3" fill="#00f8f8"/>
<rect x="757.6" y="877.3" width="62.39999999999998" height="15.3" fill="#00f000"/>
<rect x="282.5" y="877.8" width="537" height="14.3" fill="none" stroke="rgba(0,0,0,0.2)" stroke-width="1"/>
<g font-family="Liberation Sans" font-size="12" fill="#6a6a6a">
<text x="838" y="806.5">Typ srážek</text>
<text x="838" y="834.2">Stav 1</text>
<text x="838" y="861.8">Varování 1</text>
<text x="838" y="889.5">Stav 2</text>
</g>
</svg>
<div id="side" class="a">
<div id="kraje" class="a">Kraje</div>
<div id="praha" class="a">Hlavní město Praha</div>
<div class="si" style="top:65.2px"><span>D0 Rudná 0,4</span></div>
<div class="si" style="top:98.1px"><span>D0 Rudná 3,6</span></div>
<div class="si" style="top:131.1px"><span>D0 Rudná 3,7</span></div>
<div class="si" style="top:164.1px"><span>D0 Rudná 7,1</span></div>
<div class="si" style="top:197.0px"><span>D0 Rudná 9,5</span></div>
<div class="si" style="top:229.9px"><span>D0 Rudná 9,7</span></div>
<div class="si" style="top:262.9px"><span>D0 Rudná 11,6</span></div>
<div class="si" style="top:295.9px"><span>D0 Rudná 11,7</span></div>
<div class="si" style="top:328.8px"><span>D0 Rudná 11,8</span></div>
<div class="si" style="top:361.8px"><span>D0 Rudná 14,1</span></div>
<div class="si" style="top:394.7px"><span>D0 Rudná 14,2</span></div>
<div class="si" style="top:427.7px"><span>D0 Rudná 16,0</span></div>
<div class="si" style="top:460.6px"><span>D0 Rudná Slivenec 16,0</span></div>
<div class="si" style="top:493.5px"><span>D0 Rudná 20,2</span></div>
<div class="si" style="top:526.5px"><span>D0 Rudná 23,6</span></div>
<div class="si" style="top:559.5px"><span>D0 Rudná 26,4</span></div>
<div class="si" style="top:592.4px"><span>D0 Rudná 26,4- most</span></div>
<div class="si" style="top:625.4px"><span>D0 Poříčany 60,4</span></div>
<div class="si" style="top:658.3px"><span>D0 Poříčany 60,4 most</span></div>
<div class="si" style="top:691.2px"><span>D0 Poříčany 62,4- most</span></div>
<div class="si sel" style="top:724.2px"><span>D0 Poříčany 62,5</span></div>
<div class="si" style="top:757.2px"><span>D0 Mirošovice 77,8</span></div>
</div>
<svg width="0" height="0" style="position:absolute">
<defs>
<g id="sun"><circle cx="0" cy="0" r="5.8" fill="none" stroke="#fff" stroke-width="1.7"/>
<g stroke="#fff" stroke-width="1.8" stroke-linecap="butt">
<path d="M0,-8.6V-12.6M0,8.6V12.6M-8.6,0H-12.6M8.6,0H12.6M6.1,-6.1L8.9,-8.9M-6.1,6.1L-8.9,8.9M-6.1,-6.1L-8.9,-8.9M6.1,6.1L8.9,8.9"/></g></g>
<g id="excl"><path d="M-2,-7.5H2L1.4,3H-1.4Z" fill="#fff"/><rect x="-2" y="4.3" width="4" height="3.3" rx="0.8" fill="#fff"/></g>
<g id="road"><path d="M-5.6,-7.6H-1V7.6H-12.5Z M1,-7.6H5.6L12.5,7.6H1Z" fill="#fff"/></g>
</defs></svg>
<div id="rp" class="a">
 <svg class="a" style="left:0;top:0" width="224" height="122">
  <g transform="translate(33.6,12.4) scale(0.8)" fill="#d7f3fb"><path d="M-2.6,-12.4h5.2l0.8,3.6l2.6,1.1l3.1,-2l3.7,3.7l-2,3.1l1.1,2.6l3.6,0.8v5.2l-3.6,0.8l-1.1,2.6l2,3.1l-3.7,3.7l-3.1,-2l-2.6,1.1l-0.8,3.6h-5.2l-0.8,-3.6l-2.6,-1.1l-3.1,2l-3.7,-3.7l2,-3.1l-1.1,-2.6l-3.6,-0.8v-5.2l3.6,-0.8l1.1,-2.6l-2,-3.1l3.7,-3.7l3.1,2l2.6,-1.1z M0,-5.2a5.2,5.2 0 1,0 0.01,0z" fill-rule="evenodd"/></g>
  <g transform="translate(44,29.6) scale(0.4)" fill="#d7f3fb"><path d="M-2.6,-12.4h5.2l0.8,3.6l2.6,1.1l3.1,-2l3.7,3.7l-2,3.1l1.1,2.6l3.6,0.8v5.2l-3.6,0.8l-1.1,2.6l2,3.1l-3.7,3.7l-3.1,-2l-2.6,1.1l-0.8,3.6h-5.2l-0.8,-3.6l-2.6,-1.1l-3.1,2l-3.7,-3.7l2,-3.1l-1.1,-2.6l-3.6,-0.8v-5.2l3.6,-0.8l1.1,-2.6l-2,-3.1l3.7,-3.7l3.1,2l2.6,-1.1z M0,-5.2a5.2,5.2 0 1,0 0.01,0z" fill-rule="evenodd"/></g>
  <path d="M105.3,11.3 Q105.3,5.5 111,5.5 Q117,5.5 117,10.8 Q117,14 113.8,16 Q111.6,17.5 111.6,20.6" fill="none" stroke="#d7f3fb" stroke-width="5"/>
  <circle cx="111.6" cy="27.3" r="3" fill="#d7f3fb"/>
  <path d="M198.6,12.4 L187.6,1.4 V7.2 Q173,8 170.5,20 Q170,26 172.5,31.6 Q176,19 187.6,17.6 V23.4 Z" fill="#d7f3fb"/>
  <g font-size="11.8" fill="#1b6d95" font-family="Liberation Sans">
   <text x="10" y="56.3">Nastavení</text>
   <text x="83.5" y="56.3">Nápověda</text>
   <text x="162.6" y="56.3">Odhlásit</text>
  </g>
  <rect x="22.6" y="79.5" width="177.8" height="26.7" fill="#1a8fb7" stroke="#4ab8dc" stroke-width="1"/>
  <rect x="43" y="85.3" width="24" height="16.5" fill="#fff"/>
  <rect x="44" y="93.5" width="22" height="7.3" fill="#d7141a"/>
  <path d="M44,86.3 L56,93.5 L44,100.8Z" fill="#11457e"/>
  <text x="75" y="97.8" font-size="12.3" fill="#e3f4fa" font-family="Liberation Sans">česky</text>
  <path d="M179,91.5 L184,96 L189,91.5" fill="none" stroke="#fff" stroke-width="2.6"/>
 </svg>
 <div class="a" style="left:0;top:122px;width:224px;height:1px;background:#5ccfee"></div>
 <div class="a" style="left:12.7px;top:136.5px;font-size:16px;font-weight:bold;color:#dff2c6;white-space:nowrap;line-height:18px">Meteo alarmy</div>
 <svg class="a" style="left:128px;top:133px" width="44" height="22">
  <rect x="1.4" y="1.2" width="41" height="19" rx="9.5" fill="none" stroke="#e2f5fb" stroke-width="2"/>
  <path d="M9.5,10.8 L13,14.2 L19,7.5" fill="none" stroke="#e2f5fb" stroke-width="2"/>
  <circle cx="32.8" cy="10.8" r="5.7" fill="#d9eef3"/>
 </svg>
 <div class="a" style="left:0;top:165px;width:224px;height:1px;background:#5ccfee"></div>
 <svg class="a" style="left:12px;top:181px" width="16" height="12"><path d="M2.5,3 L7.5,7.5 L12.5,3" fill="none" stroke="#dff2c6" stroke-width="3"/></svg>
 <div class="a" style="left:36.9px;top:178.5px;font-size:15.4px;font-weight:bold;color:#dff2c6;white-space:nowrap;line-height:18px">Oblíbené stanice</div>
<div class="a" style="left:0;top:208px;width:224px;height:114px;background:#c8c8c8">
<div class="a" style="left:6px;top:15px;font-size:12.8px;white-space:nowrap;line-height:16px"><b style="color:#34496b;text-decoration:underline">D0 Rudná 11,7</b> <span style="color:#6f6f6f;font-size:12.5px">(11:14)</span></div>
<svg class="a" style="left:0;top:0" width="224" height="114"><use href="#sun" x="23.5" y="56"/><use href="#excl" x="119" y="56"/><use href="#road" x="23.5" y="90"/><path d="M119,79.5 L131.5,101.5 H106.5Z" fill="#fff"/><path d="M117.6,86 H120.4 L120,94 H118Z" fill="#c8c8c8"/><rect x="117.6" y="95.5" width="2.8" height="2.8" fill="#c8c8c8"/></svg>
<div class="a" style="left:42.6px;top:47px;font-size:12.5px;color:#3f4a55;line-height:18px;white-space:nowrap">-</div>
<div class="a" style="left:138px;top:47px;font-size:12.5px;color:#3f4a55;line-height:18px;white-space:nowrap">-</div>
<div class="a" style="left:42.6px;top:81px;font-size:12.5px;color:#3f4a55;line-height:18px;white-space:nowrap">-</div>
<div class="a" style="left:138px;top:81px;font-size:12.5px;color:#3f4a55;line-height:18px;white-space:nowrap">-</div>
</div>
<div class="a" style="left:0;top:322px;width:224px;height:114px;background:#6cc8e7">
<div class="a" style="left:6px;top:15px;font-size:12.8px;white-space:nowrap;line-height:16px"><b style="color:#34496b;text-decoration:underline">D1 Mirošovice 8,6</b> <span style="color:#4f7087;font-size:12.5px">(14:14)</span></div>
<svg class="a" style="left:0;top:0" width="224" height="114"><use href="#sun" x="23.5" y="56"/><use href="#excl" x="119" y="56"/><use href="#road" x="23.5" y="90"/><path d="M119,79.5 L131.5,101.5 H106.5Z" fill="#fff"/><path d="M117.6,86 H120.4 L120,94 H118Z" fill="#6cc8e7"/><rect x="117.6" y="95.5" width="2.8" height="2.8" fill="#6cc8e7"/></svg>
<div class="a" style="left:42.6px;top:47px;font-size:12.5px;color:#2d5878;line-height:18px;white-space:nowrap">-0,5</div>
<div class="a" style="left:138px;top:47px;font-size:12.5px;color:#2d5878;line-height:18px;white-space:nowrap">Suchý</div>
<div class="a" style="left:42.6px;top:81px;font-size:12.5px;color:#2d5878;line-height:18px;white-space:nowrap">3,3</div>
<div class="a" style="left:138px;top:81px;font-size:12.5px;color:#2d5878;line-height:18px;white-space:nowrap">Bez varování</div>
</div>
<div class="a" style="left:0;top:435px;width:224px;height:1px;background:#44a6ca"></div>
<div class="a" style="left:0;top:436.5px;width:224px;height:113.5px;background:#6cc8e7">
<div class="a" style="left:6px;top:15px;font-size:12.8px;white-space:nowrap;line-height:16px"><b style="color:#34496b;text-decoration:underline">I/18 Příbram</b> <span style="color:#4f7087;font-size:12.5px">(14:10)</span></div>
<svg class="a" style="left:0;top:0" width="224" height="113.5"><use href="#sun" x="23.5" y="56"/><use href="#excl" x="119" y="56"/><use href="#road" x="23.5" y="90"/><path d="M119,79.5 L131.5,101.5 H106.5Z" fill="#fff"/><path d="M117.6,86 H120.4 L120,94 H118Z" fill="#6cc8e7"/><rect x="117.6" y="95.5" width="2.8" height="2.8" fill="#6cc8e7"/></svg>
<div class="a" style="left:42.6px;top:47px;font-size:12.5px;color:#2d5878;line-height:18px;white-space:nowrap">-2,0</div>
<div class="a" style="left:138px;top:47px;font-size:12.5px;color:#2d5878;line-height:18px;white-space:nowrap">Suchý</div>
<div class="a" style="left:42.6px;top:81px;font-size:12.5px;color:#2d5878;line-height:18px;white-space:nowrap">2,1</div>
<div class="a" style="left:138px;top:81px;font-size:12.5px;color:#2d5878;line-height:18px;white-space:nowrap">Bez varování</div>
</div>
<div class="a" style="left:0;top:549.0px;width:224px;height:1px;background:#44a6ca"></div>
<div class="a" style="left:0;top:550.5px;width:224px;height:120.5px;background:#6cc8e7">
<div class="a" style="left:6px;top:15px;font-size:12.8px;white-space:nowrap;line-height:16px"><b style="color:#34496b;text-decoration:underline">I/20 Bečov</b> <span style="color:#4f7087;font-size:12.5px">(14:01)</span></div>
<svg class="a" style="left:0;top:0" width="224" height="120.5"><use href="#sun" x="23.5" y="56.3"/><use href="#excl" x="119" y="57"/><use href="#road" x="23.5" y="98"/><path d="M119,87.5 L131.5,109.5 H106.5Z" fill="#fff"/><path d="M117.6,94 H120.4 L120,102 H118Z" fill="#6cc8e7"/><rect x="117.6" y="103.5" width="2.8" height="2.8" fill="#6cc8e7"/></svg>
<div class="a" style="left:42.6px;top:50px;font-size:12.5px;color:#2d5878;line-height:18px;white-space:nowrap">-2,2</div>
<div class="a" style="left:138px;top:39.5px;font-size:12.5px;color:#2d5878;line-height:21px;white-space:nowrap">Mokro,<br>nasoleno</div>
<div class="a" style="left:42.6px;top:89px;font-size:12.5px;color:#2d5878;line-height:18px;white-space:nowrap">-0,2</div>
<div class="a" style="left:138px;top:89px;font-size:12.5px;color:#2d5878;line-height:18px;white-space:nowrap">Námraza</div>
</div>
<div class="a" style="left:0;top:670.0px;width:224px;height:1px;background:#44a6ca"></div>
</div>
<div id="sb" class="a"></div>
<div id="thumb" class="a"></div>
</body></html>
